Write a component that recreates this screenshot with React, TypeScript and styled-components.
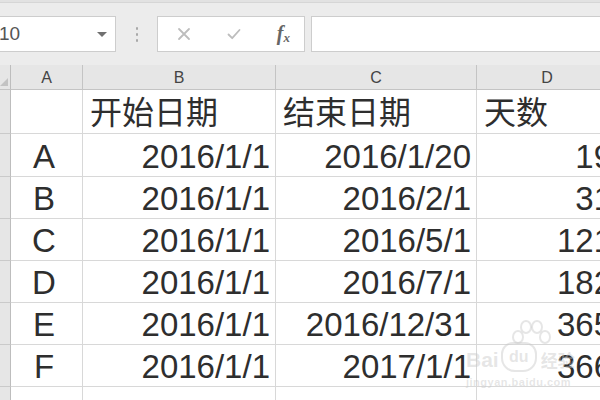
import React from "react";
import styled, { createGlobalStyle } from "styled-components";

const GlobalStyle = createGlobalStyle`
  html, body {
    margin: 0;
    padding: 0;
    background: #ececec;
    overflow: hidden;
  }
`;

const FONT = `"Liberation Sans", "Noto Sans CJK SC", Arial, sans-serif`;

const rows = [
  { label: "A", start: "2016/1/1", end: "2016/1/20", days: "19" },
  { label: "B", start: "2016/1/1", end: "2016/2/1", days: "31" },
  { label: "C", start: "2016/1/1", end: "2016/5/1", days: "121" },
  { label: "D", start: "2016/1/1", end: "2016/7/1", days: "182" },
  { label: "E", start: "2016/1/1", end: "2016/12/31", days: "365" },
  { label: "F", start: "2016/1/1", end: "2017/1/1", days: "366" },
];

export default function App() {
  return (
    <>
      <GlobalStyle />
      <Window>
        <TopEdge />
        <Toolbar>
          <NameBox>
            <span>10</span>
            <Caret />
          </NameBox>
          <Grip>
            <i />
            <i />
            <i />
          </Grip>
          <FormulaButtons>
            <ToolIcon viewBox="0 0 14 14">
              <path d="M2 2 L12 12 M12 2 L2 12" />
            </ToolIcon>
            <ToolIcon viewBox="0 0 14 14">
              <path d="M1.5 7.5 L5.2 11.2 L12.5 3" />
            </ToolIcon>
            <Fx>
              f<sub>x</sub>
            </Fx>
          </FormulaButtons>
          <FormulaInput />
        </Toolbar>

        <Sheet>
          <Corner>
            <CornerMark />
          </Corner>
          <ColHead>A</ColHead>
          <ColHead>B</ColHead>
          <ColHead>C</ColHead>
          <ColHead>D</ColHead>

          <RowHead />
          <Cell />
          <Cell $align="left" $cjk>开始日期</Cell>
          <Cell $align="left" $cjk>结束日期</Cell>
          <Cell $align="left" $cjk>天数</Cell>

          {rows.map((r) => (
            <React.Fragment key={r.label}>
              <RowHead />
              <Cell $align="center">{r.label}</Cell>
              <Cell>{r.start}</Cell>
              <Cell>{r.end}</Cell>
              <Cell>{r.days}</Cell>
            </React.Fragment>
          ))}

          <RowHead />
          <Cell />
          <Cell />
          <Cell />
          <Cell />
        </Sheet>

        <Watermark>
          <Paw>
            <i />
            <i />
            <i />
            <i />
          </Paw>
          <MarkLine>
            <span>Bai</span>
            <Du>du</Du>
            <span>经验</span>
          </MarkLine>
          <MarkUrl>jingyan.baidu.com</MarkUrl>
        </Watermark>
      </Window>
    </>
  );
}

const Window = styled.div`
  position: relative;
  width: 600px;
  height: 400px;
  overflow: hidden;
  background: #ececec;
  font-family: ${FONT};
`;

const TopEdge = styled.div`
  height: 2px;
  background: #e2e2e2;
  border-bottom: 1px solid #d6d6d6;
`;

const Toolbar = styled.div`
  display: flex;
  align-items: center;
  height: 36px;
  padding: 13px 0 13px 0;
`;

const Box = styled.div`
  box-sizing: border-box;
  height: 36px;
  background: #fff;
  border: 1px solid #cdcdcd;
`;

const NameBox = styled(Box)`
  width: 117px;
  margin-left: -1px;
  display: flex;
  align-items: center;
  justify-content: space-between;
  padding: 0 8px 0 0;
  font-size: 19px;
  color: #555;
  span {
    margin-left: -1px;
  }
`;

const Caret = styled.div`
  width: 0;
  height: 0;
  border-left: 5px solid transparent;
  border-right: 5px solid transparent;
  border-top: 5px solid #707070;
  margin-top: 1px;
`;

const Grip = styled.div`
  width: 41px;
  display: flex;
  flex-direction: column;
  align-items: center;
  gap: 3px;
  i {
    display: block;
    width: 2px;
    height: 3px;
    background: #a8a8a8;
    border-radius: 1px;
  }
`;

const FormulaButtons = styled(Box)`
  width: 148px;
  display: flex;
  align-items: center;
  justify-content: space-between;
  padding: 0 14px 0 19px;
`;

const ToolIcon = styled.svg`
  width: 14px;
  height: 14px;
  fill: none;
  stroke: #bdbdbd;
  stroke-width: 1.8;
  stroke-linecap: round;
  stroke-linejoin: round;
`;

const Fx = styled.span`
  font-family: "Liberation Serif", "DejaVu Serif", serif;
  font-style: italic;
  font-weight: bold;
  font-size: 20px;
  color: #666;
  sub {
    font-size: 13px;
    vertical-align: -2px;
  }
`;

const FormulaInput = styled(Box)`
  flex: 1;
  margin-left: 6px;
  margin-right: -4px;
`;

const Sheet = styled.div`
  display: grid;
  grid-template-columns: 11px 72px 193px 201px 141px;
  grid-template-rows: 25px 44px 43px repeat(6, 42px) 30px;
  width: 618px;
  background: #fff;
`;

const HeadBase = styled.div`
  box-sizing: border-box;
  background: #e6e6e6;
  border-right: 1px solid #c4c4c4;
  border-bottom: 1px solid #c4c4c4;
`;

const Corner = styled(HeadBase)`
  position: relative;
  border-right-color: #bdbdbd;
`;

const CornerMark = styled.div`
  position: absolute;
  right: 2px;
  bottom: 3px;
  width: 0;
  height: 0;
  border-left: 8px solid transparent;
  border-bottom: 8px solid #c3c3c3;
`;

const ColHead = styled(HeadBase)`
  display: flex;
  align-items: center;
  justify-content: center;
  padding-top: 2px;
  font-size: 16px;
  color: #444;
`;

const RowHead = styled(HeadBase)`
  border-bottom-color: #cacaca;
  border-right-color: #bdbdbd;
`;

const Cell = styled.div<{ $align?: "left" | "center" | "right"; $cjk?: boolean }>`
  box-sizing: border-box;
  display: flex;
  align-items: flex-end;
  justify-content: ${(p) =>
    p.$align === "left" ? "flex-start" : p.$align === "center" ? "center" : "flex-end"};
  padding: ${(p) => (p.$cjk ? "0 0 0 7px" : "0 5px 0 0")};
  border-right: 1px solid #d8d8d8;
  border-bottom: 1px solid #d8d8d8;
  font-size: ${(p) => (p.$cjk ? "32px" : "33px")};
  color: #2e2e2e;
  white-space: nowrap;
  line-height: normal;
`;

const Watermark = styled.div`
  position: absolute;
  left: 466px;
  top: 322px;
  width: 130px;
  color: rgba(200, 200, 200, 0.45);
  pointer-events: none;
`;

const Paw = styled.div`
  position: absolute;
  left: 46px;
  top: -2px;
  width: 38px;
  height: 30px;
  i {
    position: absolute;
    width: 8px;
    height: 10px;
    border-radius: 50%;
    border: 2px solid rgba(200, 200, 200, 0.45);
  }
  i:nth-child(1) { left: 0; top: 10px; }
  i:nth-child(2) { left: 8px; top: 0; }
  i:nth-child(3) { left: 19px; top: 0; }
  i:nth-child(4) { left: 27px; top: 10px; }
`;

const MarkLine = styled.div`
  display: flex;
  align-items: flex-end;
  gap: 2px;
  margin-top: 20px;
  font-size: 21px;
  font-weight: bold;
  span:last-child {
    font-size: 17px;
    margin-left: 2px;
  }
`;

const Du = styled.span`
  display: inline-flex;
  align-items: center;
  justify-content: center;
  width: 32px;
  height: 26px;
  border: 2px solid rgba(200, 200, 200, 0.45);
  border-radius: 12px 12px 14px 14px;
  font-size: 16px;
`;

const MarkUrl = styled.div`
  margin-top: 4px;
  font-size: 11px;
  font-weight: bold;
  letter-spacing: 0.5px;
`;
